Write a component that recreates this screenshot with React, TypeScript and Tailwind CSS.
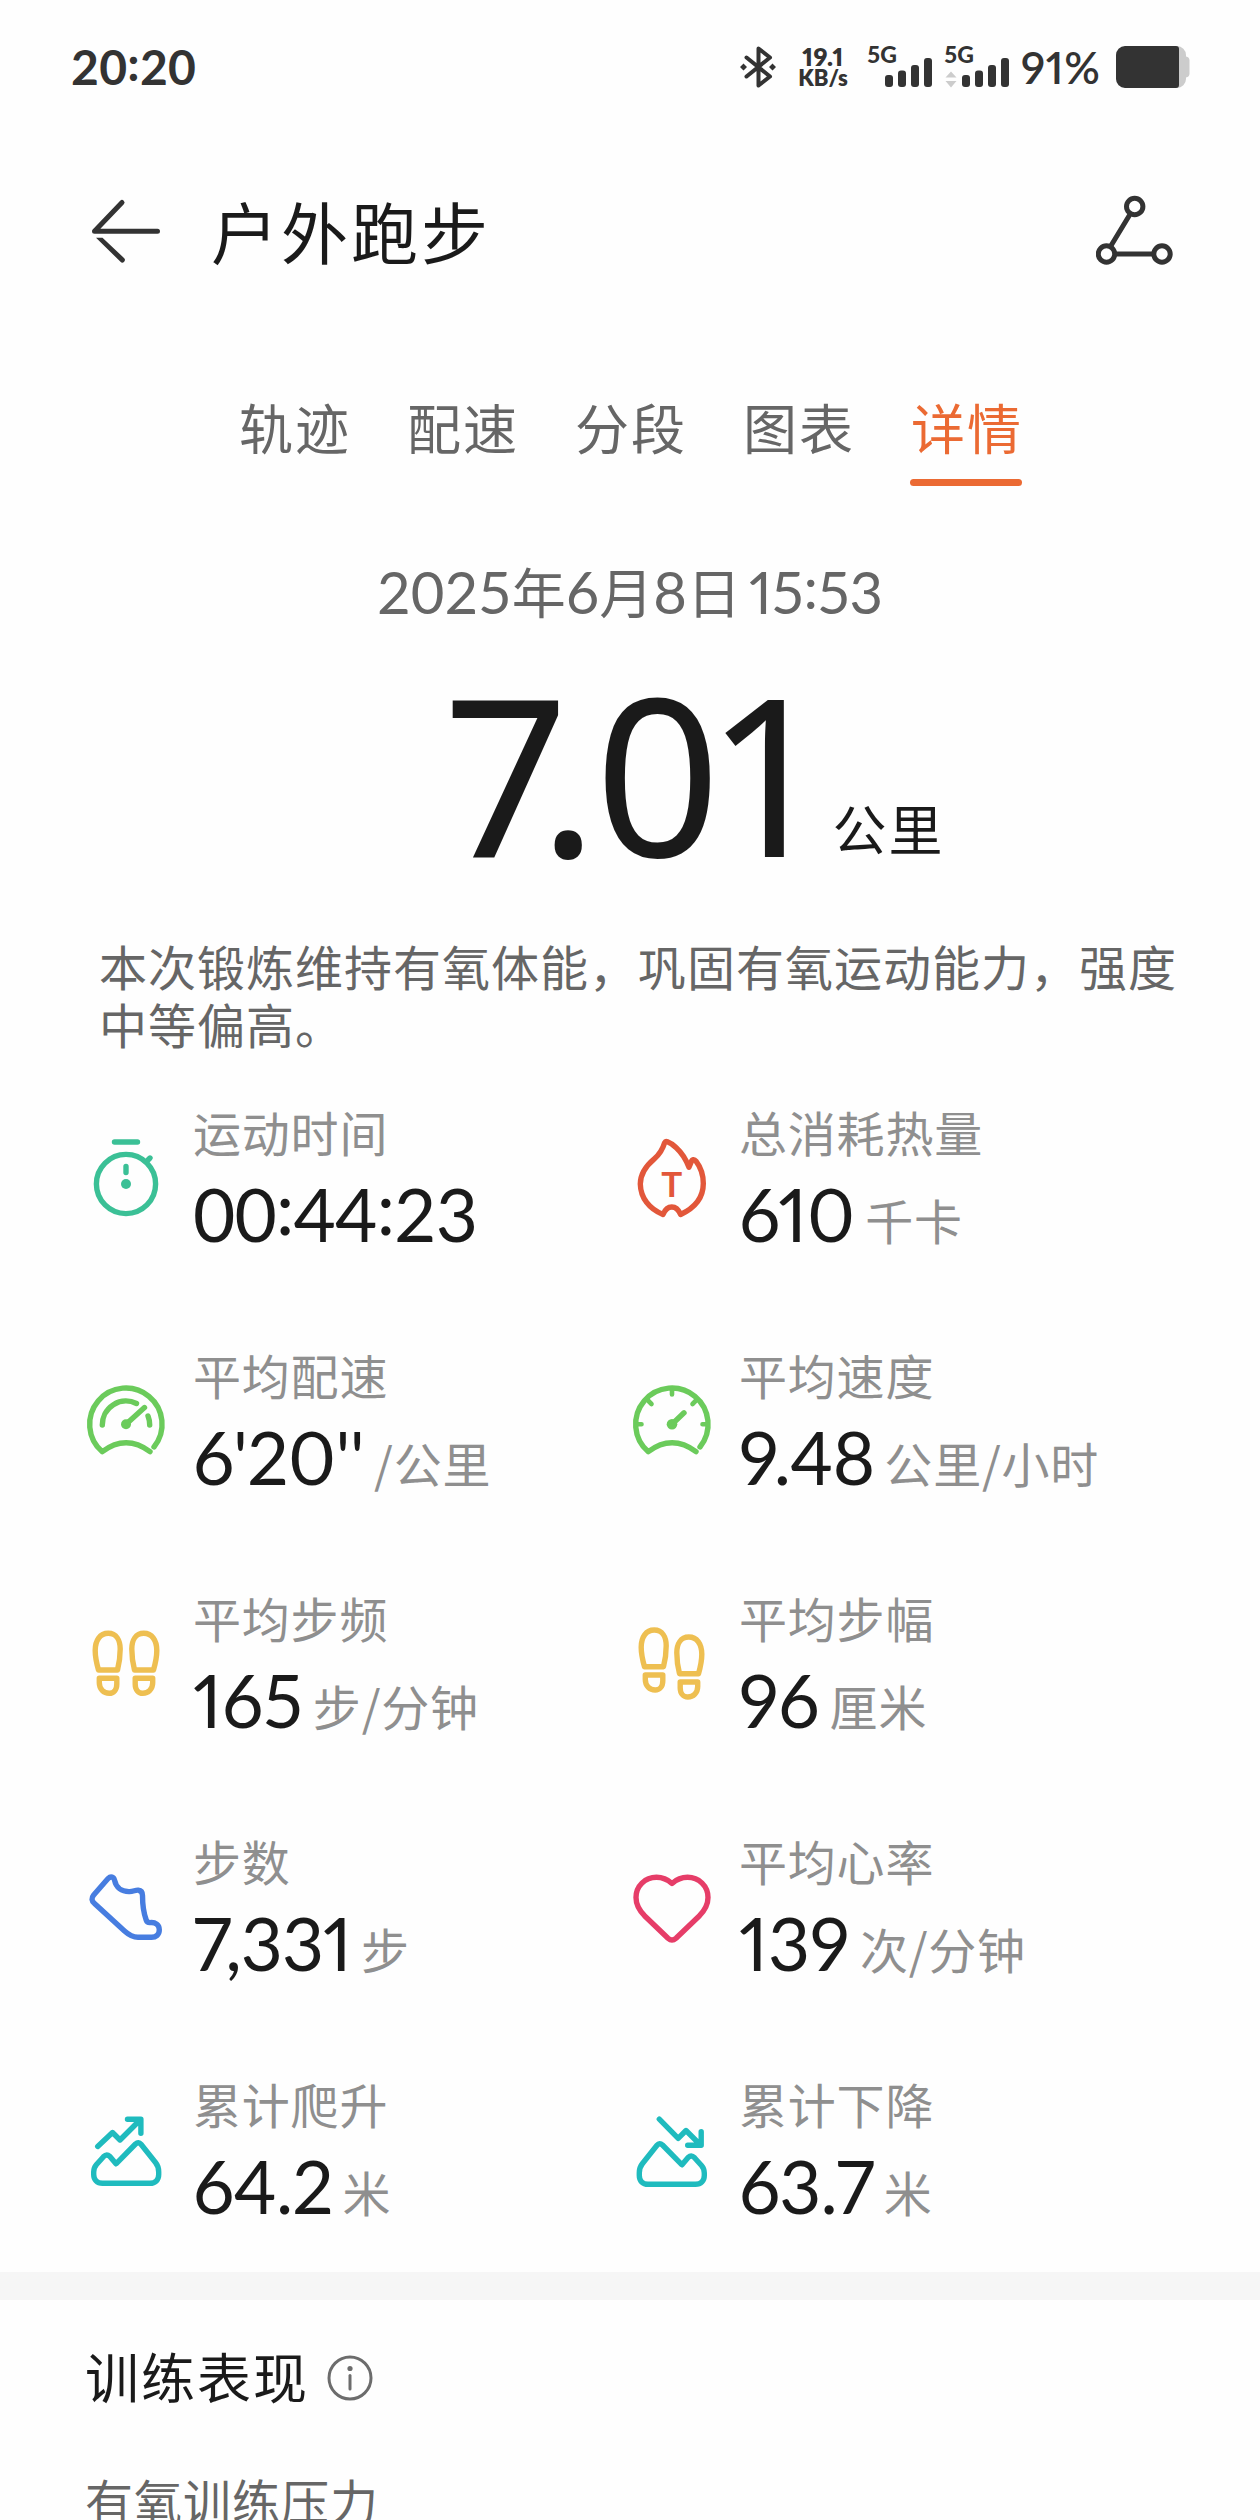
import { ReactNode } from "react";

// colons sit at digit height, not on the baseline
const Digits = ({ text }: { text: string }) => (
    <>
        {text.split("").map((char, i) =>
            char === ":" ? (
                <span key={i} className="relative -top-[0.09em]">
                    {char}
                </span>
            ) : (
                char
            ),
        )}
    </>
);

const StatIcon = ({
    color,
    children,
}: {
    color: string;
    children: ReactNode;
}) => (
    <svg
        viewBox="0 0 96 96"
        className={`mt-[31px] h-24 w-24 shrink-0 ${color}`}
        fill="none"
        stroke="currentColor"
        strokeWidth="5.4"
        strokeLinecap="round"
        strokeLinejoin="round"
    >
        {children}
    </svg>
);

const StopwatchIcon = () => (
    <StatIcon color="text-[#3bc096]">
        <path d="M36.5 12h23M48 36.5v6" />
        <circle cx="48" cy="54" r="29.6" />
        <path d="m70 30 2-2" />
        <circle cx="48" cy="54" r="5" fill="currentColor" stroke="none" />
    </StatIcon>
);

const FlameIcon = () => (
    <StatIcon color="text-[#e2573a]">
        <path d="M40.7 12.6C38.5 20 35 25 30.3 28.8 20.5 37 16.3 44.5 16.3 54c.3 14 9 25 22.7 30.5 2-4.8 4.8-7.5 8.8-7.5s6.8 2.7 8.800 7.500C70.500 78 79.300 68 79.300 53.500c0-9-2.500-16-7.300-22.300-1.800-2.300-4-1.800-4.700.6L65 37.300C62 29.500 57.500 22.500 52 17.500c-2.700-2.700-5-4.300-8.500-5.700-1.300-.5-2.300-.2-2.800.8Z" />
        <text
            x="47.8"
            y="66.8"
            textAnchor="middle"
            fill="currentColor"
            stroke="none"
            className="font-['Lato',sans-serif] text-[35px] font-bold"
        >
            T
        </text>
    </StatIcon>
);

const PaceIcon = () => (
    <StatIcon color="text-[#6bcb5b]">
        <path d="M76 74A36.2 36.2 0 1 0 24.3 78.7Q48 61 72 78.7" />
        <path d="M24.3 52A23.7 23.7 0 0 1 58.5 30.5M70 43a23.7 23.7 0 0 1 1.7 9" />
        <path d="M48 51.3 66.5 34.5" />
        <circle cx="48" cy="51.3" r="5" fill="currentColor" stroke="none" />
    </StatIcon>
);

const SpeedIcon = () => (
    <StatIcon color="text-[#6bcb5b]">
        <path d="M76 74A36.2 36.2 0 1 0 24.3 78.7Q48 61 72 78.7" />
        <path
            strokeWidth="4.6"
            d="M48 16v5.5M13 51.3h4.5M78.5 51.3H83M24.5 28l3 3M71.5 28l-3 3"
        />
        <path d="M48 51.3 60 39.8" />
        <circle cx="48" cy="51.3" r="5.3" fill="currentColor" stroke="none" />
    </StatIcon>
);

const Footprint = ({ transform }: { transform?: string }) => (
    <g transform={transform}>
        <path d="M20.5 54C18.5 47 17.2 41 17.2 34.5 17.2 24.5 22 17.3 30.2 17.3S42.2 24.5 42.2 33c0 7-.9 14-2.7 21Z" />
        <path d="M21.3 62.3h17.5V68c0 6-3.3 9.3-7.6 9.3-5.6 0-9.9-4.3-9.9-10.5Z" />
    </g>
);

const CadenceIcon = () => (
    <StatIcon color="text-[#eebf51]">
        <Footprint />
        <Footprint transform="matrix(-1 0 0 1 96 0)" />
    </StatIcon>
);

const StrideIcon = () => (
    <StatIcon color="text-[#eebf51]">
        <Footprint transform="translate(0 -3.3)" />
        <Footprint transform="matrix(-1 0 0 1 95 3.7)" />
    </StatIcon>
);

const ShoeIcon = () => (
    <StatIcon color="text-[#477de0]">
        <path d="M30.3 19.3c2.5-2.5 5.5-1.3 6.2 1.7 1.5 7.5 7 11.8 15 11.6 4-.1 6-1.7 8.8-1.4 3 .3 4.2 2.3 4.2 5.3 0 9 1 17 3.7 24.5.7 2 1.900 2.700 3.800 2.600 5.500-.6 9.300 2.200 9.300 7.200s-3.300 7.500-7.800 7.500H60c-5.500 0-9.500-2.700-13.500-6.300L16.500 44.500c-3-2.500-3.300-5.500-.8-8.500Z" />
    </StatIcon>
);

const HeartIcon = () => (
    <StatIcon color="text-[#e63d68]">
        <path d="M48 24.5C43 20 38 18.3 32.5 18.3 21 18.3 12 27 12 38.5c0 7.5 3.5 13 8.5 18.200L44 79.200c2.700 2.400 5.300 2.400 8 0l23.500-22.500C80.500 51.500 84 46 84 38.500c0-11.500-9-20.200-20.500-20.200C58 18.300 53 20 48 24.500Z" />
    </StatIcon>
);

const MOUNTAIN =
    "M18.5 62.5 25.5 54.7c2.2-2.3 4.2-2.3 6.4-.2l6.1 7.3L57.5 42c2-1.8 3.8-1.7 5.5.3L77.5 60.5c2.5 3 3.2 5.5 3.2 9.5v2.5c0 5.5-3.5 8.8-8.7 8.8H24.5c-5.5 0-8.8-3.5-8.8-8.8V70c0-3 .8-5.2 2.8-7.5Z";

const ClimbIcon = () => (
    <StatIcon color="text-[#1fbbbe]">
        <path d="M19.7 44.5 34.5 30.5 42 38 62 18M49.5 17.3h13.4v14" />
        <path d={MOUNTAIN} />
    </StatIcon>
);

const DescentIcon = () => (
    <StatIcon color="text-[#1fbbbe]">
        <path d="M35.3 17.2 54.2 36.3 62 28.5 76 42.5M63.7 43.3h13.5V29.800" />
        <path d={MOUNTAIN} transform="matrix(-1 0 0 1 96 1)" />
    </StatIcon>
);

const stats = [
    { label: "运动时间", value: "00:44:23", icon: <StopwatchIcon /> },
    { label: "总消耗热量", value: "610", unit: "千卡", icon: <FlameIcon /> },
    { label: "平均配速", value: "6'20''", unit: "/公里", icon: <PaceIcon /> },
    { label: "平均速度", value: "9.48", unit: "公里/小时", icon: <SpeedIcon /> },
    { label: "平均步频", value: "165", unit: "步/分钟", icon: <CadenceIcon /> },
    { label: "平均步幅", value: "96", unit: "厘米", icon: <StrideIcon /> },
    { label: "步数", value: "7,331", unit: "步", icon: <ShoeIcon /> },
    { label: "平均心率", value: "139", unit: "次/分钟", icon: <HeartIcon /> },
    { label: "累计爬升", value: "64.2", unit: "米", icon: <ClimbIcon /> },
    { label: "累计下降", value: "63.7", unit: "米", icon: <DescentIcon /> },
];

const valueClass = (value: string) => {
    if (value.includes(":")) return "tracking-[-0.8px]";
    if (value.includes("'")) return "proportional-nums tracking-[-0.6px]";
    if (/^\d+$/.test(value)) return "proportional-nums";
    return "proportional-nums tracking-[-1px]";
};

const tabs = ["轨迹", "配速", "分段", "图表", "详情"];

const Signal = ({ data }: { data?: boolean }) => (
    <svg
        className="overflow-visible"
        width="64"
        height="46"
        viewBox="0 0 64 46"
        fill="currentColor"
    >
        <text
            x="-1"
            y="18.5"
            className="font-['Lato',sans-serif] text-[23px] font-black"
        >
            5G
        </text>
        {data && (
            <path fill="#cccccc" d="M6 27.5 11.5 33.5H.5ZM6 43.5.5 37h11Z" />
        )}
        <rect x="17" y="31" width="8" height="12" rx="3" />
        <rect x="30" y="26.5" width="8" height="16.5" rx="3" />
        <rect x="43" y="21" width="8" height="22" rx="3" />
        <rect x="56" y="14" width="8" height="29" rx="3" />
    </svg>
);

const StatusBar = () => (
    <div className="flex h-[134px] items-center pr-[70px] pl-[71px] font-['Lato',sans-serif] text-[#333333]">
        <span className="text-[48px] leading-none font-bold tracking-[0.3px]">
            <Digits text="20:20" />
        </span>
        <svg
            className="ml-auto"
            width="36"
            height="44"
            viewBox="0 0 36 44"
            fill="none"
            stroke="currentColor"
            strokeWidth="4"
            strokeLinejoin="round"
            strokeLinecap="round"
        >
            <path d="M6.5 12.5 30 31.5 18.5 40.5V3.5L30 12.5 6.5 31.5" />
            <path
                d="m3.5 18.5 3.5 3.5-3.5 3.5L0 22ZM32.5 18.5 36 22l-3.5 3.5L29 22Z"
                fill="currentColor"
                stroke="none"
            />
        </svg>
        <div className="ml-[20px] flex w-[54px] flex-col items-center leading-[22px] font-extrabold whitespace-nowrap proportional-nums">
            <span className="text-[25px] tracking-[0.6px]">19.1</span>
            <span className="text-[22px]">KB/s</span>
        </div>
        <div className="ml-[18px] flex gap-[13px]">
            <Signal />
            <Signal data />
        </div>
        <span className="ml-[12px] w-[85px] text-[44px] leading-none font-semibold tracking-[0.6px] whitespace-nowrap proportional-nums">
            91%
        </span>
        <svg className="ml-[10px]" width="74" height="42" viewBox="0 0 74 42">
            <path
                fill="#cccccc"
                d="M60 0h1a9 9 0 0 1 9 9v1.5a4 4 0 0 1 3.500 4v13a4 4 0 0 1-3.500 4V33a9 9 0 0 1-9 9h-1Z"
            />
            <path
                fill="currentColor"
                d="M9 0h51a3 3 0 0 1 3 3v36a3 3 0 0 1-3 3H9a9 9 0 0 1-9-9V9a9 9 0 0 1 9-9Z"
            />
        </svg>
    </div>
);

const Header = () => (
    <header className="flex h-[192px] items-center pr-[84px] pl-[90px]">
        <svg
            width="74"
            height="72"
            viewBox="0 0 74 72"
            fill="none"
            stroke="#333333"
            strokeWidth="5"
            strokeLinecap="round"
            strokeLinejoin="round"
        >
            <path d="M67.5 37.2H4.5L32 8.5" />
            <path
                d="M6 43.7h6.500L34 64a2.500 2.500 0 0 1-3.500 3.800Z"
                fill="#333333"
                stroke="none"
            />
        </svg>
        <h1 className="ml-[47px] text-[67px] leading-[80px] tracking-[3px] text-[#1a1a1a]">
            户外跑步
        </h1>
        <svg
            className="ml-auto"
            width="80"
            height="72"
            viewBox="0 0 80 72"
            fill="none"
            stroke="#333333"
            strokeWidth="5"
        >
            <path d="M14.5 52.5 34.5 19.5M18 60h40" />
            <circle cx="38.7" cy="12.5" r="8.2" />
            <circle cx="10.500" cy="60" r="8.2" />
            <circle cx="66" cy="60" r="8.2" />
        </svg>
    </header>
);

export default function App() {
    return (
        <div className="h-[2520px] w-[1260px] overflow-hidden bg-[#fefefe] font-['Noto_Sans_CJK_SC',sans-serif]">
            <StatusBar />
            <Header />
            <nav className="mt-[71px] flex justify-center gap-14">
                {tabs.map((tab) => (
                    <div
                        key={tab}
                        className={
                            tab === "详情"
                                ? "w-28 text-[#eb6a33]"
                                : "w-28 text-[#666666]"
                        }
                    >
                        <div className="pl-px text-[54px] leading-[60px] tracking-[2px] whitespace-nowrap">
                            {tab}
                        </div>
                        {tab === "详情" && (
                            <div className="mt-[22px] h-[7px] rounded-full bg-[#eb6a33]" />
                        )}
                    </div>
                ))}
            </nav>
            <p className="mt-[75px] h-[60px] text-center text-[54px] leading-[60px] text-[#666666]">
                <span className="font-['Lato',sans-serif] text-[58px]">2025</span>
                年
                <span className="font-['Lato',sans-serif] text-[58px]">6</span>
                月
                <span className="font-['Lato',sans-serif] text-[58px]">8</span>
                日
                <span className="ml-[8px] font-['Lato',sans-serif] text-[58px] proportional-nums">
                    <Digits text="15:53" />
                </span>
            </p>
            <div className="mt-[31px] flex h-[240px] items-baseline pl-[443px] text-[#1a1a1a]">
                <span className="font-['Noto_Sans',sans-serif] text-[220px] leading-[240px] tracking-[-3px]">
                    <span className="tracking-[-30px]">7</span>.
                    <span className="tracking-[-15px]">0</span>1
                </span>
                <span className="relative -top-[6px] ml-[4px] text-[54px] tracking-[2px]">
                    公里
                </span>
            </div>
            <p className="mt-[45px] w-[1100px] pl-[99px] text-[48px] leading-[57.5px] tracking-[1px] whitespace-nowrap text-[#666666]">
                本次锻炼维持有氧体能，巩固有氧运动能力，强度
                <br />
                中等偏高。
            </p>
            <div className="mt-[47px] grid grid-cols-[546px_546px] gap-y-[90px] pl-[78px]">
                {stats.map(({ label, value, unit, icon }) => (
                    <div key={label} className="flex h-[153px]">
                        {icon}
                        <div className="ml-[19px] whitespace-nowrap">
                            <div className="text-[48px] leading-[64px] tracking-[0.8px] text-[#8f8f8f]">
                                {label}
                            </div>
                            <div className="mt-[9px] flex h-[80px] items-baseline gap-[10px] text-[#8f8f8f]">
                                <span
                                    className={`relative top-[2px] font-['Lato',sans-serif] text-[73px] leading-[80px] text-[#1a1a1a] ${valueClass(value)}`}
                                >
                                    <Digits text={value} />
                                </span>
                                <span className="text-[48px] leading-[60px] tracking-[0.8px]">
                                    {unit}
                                </span>
                            </div>
                        </div>
                    </div>
                ))}
            </div>
            <div className="mt-[48px] h-[28px] bg-[#f6f6f6]" />
            <section className="mt-[41px] pl-[85px]">
                <div className="flex items-center">
                    <h2 className="text-[54px] leading-[70px] tracking-[2px] text-[#1a1a1a]">
                        训练表现
                    </h2>
                    <svg
                        className="mt-[3px] ml-[18px]"
                        width="46"
                        height="46"
                        viewBox="0 0 46 46"
                        fill="none"
                        stroke="#6c6c6c"
                        strokeWidth="3"
                        strokeLinecap="round"
                    >
                        <circle cx="23" cy="23" r="21" />
                        <path d="M23 20.5V34" />
                        <circle cx="23" cy="13.5" r="2.6" fill="#6c6c6c" stroke="none" />
                    </svg>
                </div>
                <p className="mt-[58px] text-[48px] leading-[60px] tracking-[1px] text-[#666666]">
                    有氧训练压力
                </p>
            </section>
        </div>
    );
}
